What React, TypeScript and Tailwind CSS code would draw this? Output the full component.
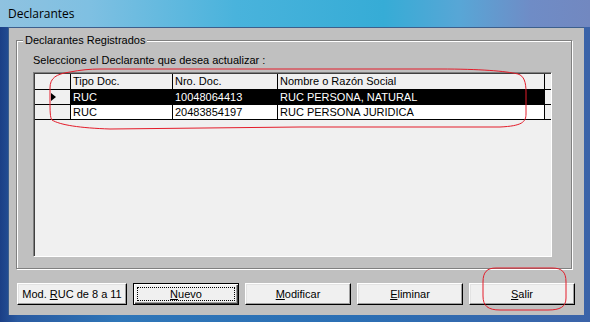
import React from 'react';

const font = { fontFamily: '"Liberation Sans", Arial, sans-serif' };

interface Row {
  tipo: string;
  nro: string;
  nombre: string;
}

const rows: Row[] = [
  { tipo: 'RUC', nro: '10048064413', nombre: 'RUC PERSONA, NATURAL' },
  { tipo: 'RUC', nro: '20483854197', nombre: 'RUC PERSONA JURIDICA' },
];

const Btn: React.FC<{ w: string; def?: boolean; children: React.ReactNode }> = ({ w, def, children }) => (
  <button
    type="button"
    className={`${w} h-[22px] bg-[#f0f0f0] text-[11px] text-black flex items-center justify-center border ${
      def
        ? 'border-black shadow-[inset_1px_1px_0_#fff,inset_-1px_-1px_0_#404040,inset_-2px_-2px_0_#a0a0a0]'
        : 'border-t-white border-l-white border-r-black border-b-black shadow-[inset_-1px_-1px_0_#a0a0a0,inset_1px_1px_0_#e3e3e3]'
    }`}
  >
    {def ? (
      <span className="flex-1 self-stretch m-[3px] border border-dotted border-black flex items-center justify-center">
        {children}
      </span>
    ) : (
      children
    )}
  </button>
);

export default function App() {
  return (
    <div
      className="w-[590px] h-[322px] relative overflow-hidden flex flex-col bg-[linear-gradient(90deg,#1b3f86_0%,#2a5aa0_3%,#2f76b8_20%,#2b6fb4_60%,#3b63a8_100%)]"
      style={font}
    >
      {/* title bar */}
      <div className="h-[27px] shrink-0 flex items-center pl-[8px] bg-[linear-gradient(90deg,#8fc2e0_0%,#7fc0e2_15%,#49b3dc_40%,#36acd6_65%,#58a6d6_78%,#6f8cc6_90%,#7288c0_100%)]">
        <span className="text-[12px] text-black" style={{ fontFamily: '"Open Sans", "Liberation Sans", sans-serif' }}>
          Declarantes
        </span>
      </div>

      {/* client area */}
      <div className="ml-[8px] mr-[6px] h-[288px] bg-[#c0c0c0] border-l border-t border-[#3d5f8c] flex flex-col px-[7px] pt-[12px]">
        {/* group box */}
        <div className="relative h-[229px] mr-[5px] border border-[#808080] shadow-[inset_1px_1px_0_#fff,1px_1px_0_#fff] flex flex-col pl-[16px] pr-[19px] pt-[13px] pb-[11px]">
          <span className="absolute -top-[8px] left-[6px] bg-[#c0c0c0] px-[2px] text-[11px] leading-[14px] text-black">
            Declarantes Registrados
          </span>
          <div className="text-[11px] leading-[13px] text-black mb-[5px]">
            Seleccione el Declarante que desea actualizar :
          </div>
          {/* grid */}
          <div className="flex-1 border border-t-[#808080] border-l-[#808080] border-r-white border-b-white">
            <div className="h-full bg-[#f0f0f0] border-l border-t border-[#404040] flex flex-col text-[11px] text-black">
              <div className="flex h-[16px] border-b border-black">
                <div className="w-[36px] border-r border-black bg-[#f0f0f0]" />
                <div className="w-[102px] border-r border-black pl-[2px] leading-[15px]">Tipo Doc.</div>
                <div className="w-[105px] border-r border-black pl-[2px] leading-[15px]">Nro. Doc.</div>
                <div className="w-[267px] border-r border-black pl-[2px] leading-[15px]">Nombre o Razón Social</div>
              </div>
              {rows.map((r, i) => (
                <div key={r.nro} className="flex h-[15px] border-b border-black">
                  <div className="w-[36px] border-r border-black bg-[#f0f0f0] flex items-center justify-center">
                    {i === 0 && (
                      <span className="w-0 h-0 border-y-[4px] border-y-transparent border-l-[5px] border-l-black ml-[2px]" />
                    )}
                  </div>
                  <div className={`w-[102px] border-r border-black pl-[2px] leading-[14px] ${i === 0 ? 'bg-black text-white' : 'bg-white'}`}>
                    {r.tipo}
                  </div>
                  <div className={`w-[105px] border-r border-black pl-[2px] leading-[14px] ${i === 0 ? 'bg-black text-white' : 'bg-white'}`}>
                    {r.nro}
                  </div>
                  <div className={`w-[267px] border-r border-black pl-[2px] leading-[14px] ${i === 0 ? 'bg-black text-white' : 'bg-white'}`}>
                    {r.nombre}
                  </div>
                </div>
              ))}
            </div>
          </div>
        </div>

        {/* buttons */}
        <div className="flex gap-[6px] mt-[14px] ml-[1px]">
          <Btn w="w-[110px]">
            Mod.&nbsp;<u>R</u>UC de 8 a 11
          </Btn>
          <Btn w="w-[106px]" def>
            <u>N</u>uevo
          </Btn>
          <Btn w="w-[106px]">
            <u>M</u>odificar
          </Btn>
          <Btn w="w-[106px]">
            <u>E</u>liminar
          </Btn>
          <Btn w="w-[106px]">
            <u>S</u>alir
          </Btn>
        </div>
      </div>

      {/* red annotation marks */}
      <svg className="absolute inset-0 pointer-events-none" width="590" height="322">
        <path
          d="M100 69 L440 69 C480 69 505 71 518 74 C524 76 526 82 526 92 L526 114 C526 122 522 126 500 127 L300 127 L110 129 C80 128 60 125 52 120 C50 118 50 110 50 100 L50 88 C50 78 56 74 70 72 C80 70 90 69 100 69 Z"
          fill="none"
          stroke="#e41c2a"
          strokeWidth="1"
        />
        <path
          d="M496 268 L552 268 C562 268 566 272 566 282 L566 298 C566 307 560 310 548 310 L500 310 C488 310 483 306 483 296 L483 282 C483 272 487 268 496 268 Z"
          fill="none"
          stroke="#e41c2a"
          strokeWidth="1"
        />
      </svg>
    </div>
  );
}
